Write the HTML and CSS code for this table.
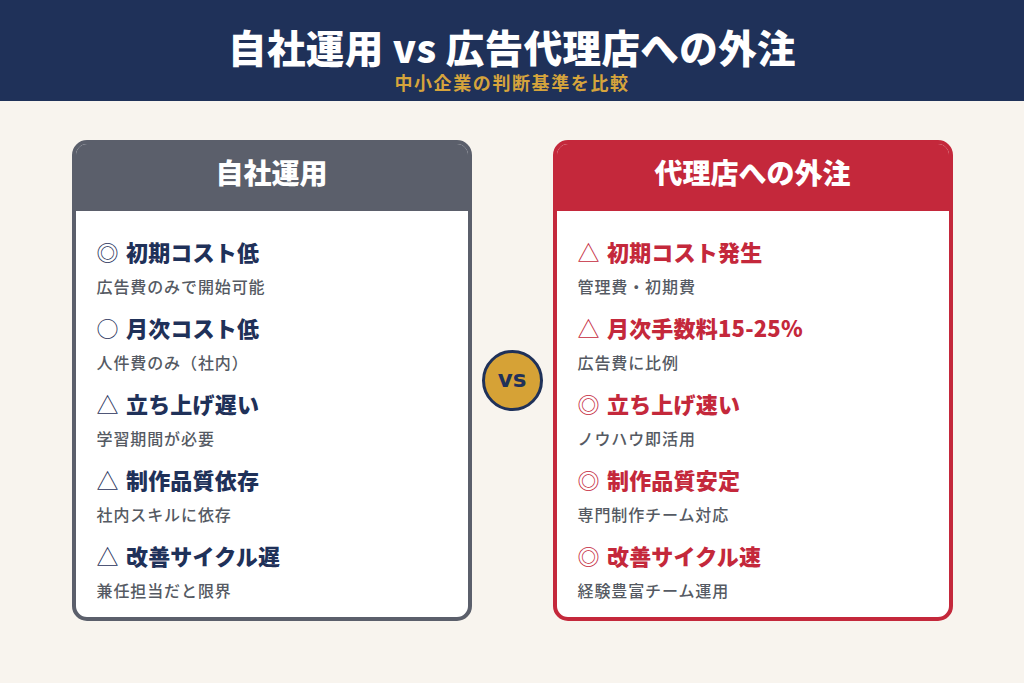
FILE: index.html
```html
<!DOCTYPE html>
<html lang="ja">
<head>
<meta charset="utf-8">
<link rel="stylesheet" href="styles.css">
</head>
<body>
<header class="banner">
  <h1 class="title">自社運用 vs 広告代理店への外注</h1>
  <p class="subtitle">中小企業の判断基準を比較</p>
</header>
<main class="compare">
  <section class="card card-self">
    <h2 class="card-head">自社運用</h2>
    <ul class="items">
      <li class="item"><p class="item-title"><span class="mark">◎</span> 初期コスト低</p><p class="item-sub">広告費のみで開始可能</p></li>
      <li class="item"><p class="item-title"><span class="mark">○</span> 月次コスト低</p><p class="item-sub">人件費のみ（社内）</p></li>
      <li class="item"><p class="item-title"><span class="mark">△</span> 立ち上げ遅い</p><p class="item-sub">学習期間が必要</p></li>
      <li class="item"><p class="item-title"><span class="mark">△</span> 制作品質依存</p><p class="item-sub">社内スキルに依存</p></li>
      <li class="item"><p class="item-title"><span class="mark">△</span> 改善サイクル遅</p><p class="item-sub">兼任担当だと限界</p></li>
    </ul>
  </section>
  <div class="vs-col"><div class="vs">vs</div></div>
  <section class="card card-agency">
    <h2 class="card-head">代理店への外注</h2>
    <ul class="items">
      <li class="item"><p class="item-title"><span class="mark">△</span> 初期コスト発生</p><p class="item-sub">管理費・初期費</p></li>
      <li class="item"><p class="item-title"><span class="mark">△</span> 月次手数料15-25%</p><p class="item-sub">広告費に比例</p></li>
      <li class="item"><p class="item-title"><span class="mark">◎</span> 立ち上げ速い</p><p class="item-sub">ノウハウ即活用</p></li>
      <li class="item"><p class="item-title"><span class="mark">◎</span> 制作品質安定</p><p class="item-sub">専門制作チーム対応</p></li>
      <li class="item"><p class="item-title"><span class="mark">◎</span> 改善サイクル速</p><p class="item-sub">経験豊富チーム運用</p></li>
    </ul>
  </section>
</main>
</body>
</html>
```
FILE: styles.css
```css
* { box-sizing: border-box; }
html, body { margin: 0; padding: 0; }
body {
  width: 1024px;
  height: 683px;
  background: #f8f4ee;
  font-family: "Noto Sans CJK JP", "Noto Sans", sans-serif;
  overflow: hidden;
}
.banner {
  background: #1f3159;
  height: 101px;
  display: flex;
  flex-direction: column;
  align-items: center;
  padding-top: 27px;
}
.title {
  margin: 0;
  color: #ffffff;
  font-size: 38.5px;
  font-weight: 900;
  line-height: 38px;
  letter-spacing: 0.4px;
}
.subtitle {
  margin: 7px 0 0;
  color: #d6a43c;
  font-size: 18px;
  font-weight: 700;
  line-height: 20px;
  letter-spacing: 1.6px;
}
.compare {
  display: flex;
  justify-content: center;
  padding-top: 39px;
}
.card {
  width: 400px;
  height: 481px;
  border: 4px solid;
  border-radius: 15px;
  background: #ffffff;
  overflow: hidden;
  display: flex;
  flex-direction: column;
}
.card-self { border-color: #5b5f6b; }
.card-agency { border-color: #c4283b; }
.card-head {
  margin: 0;
  height: 67px;
  display: flex;
  align-items: center;
  justify-content: center;
  color: #ffffff;
  font-size: 28px;
  font-weight: 900;
  padding-bottom: 12px;
}
.card-self .card-head { background: #5b5f6b; }
.card-agency .card-head { background: #c4283b; }
.items {
  list-style: none;
  margin: 0;
  padding: 25px 20px 0 21px;
  display: flex;
  flex-direction: column;
  gap: 15px;
}
.item p { margin: 0; }
.item-title {
  font-size: 22px;
  font-weight: 900;
  line-height: 30px;
  letter-spacing: 0.2px;
}
.card-self .item-title { color: #1f3159; }
.card-agency .item-title { color: #c4283b; }
.mark { font-weight: 400; margin-right: 2px; }
.item-sub {
  margin-top: 9px !important;
  font-size: 16px;
  font-weight: 500;
  line-height: 22px;
  color: #555a63;
  letter-spacing: 0.9px;
}
.vs-col {
  width: 81px;
  display: flex;
  align-items: center;
  justify-content: center;
}
.vs {
  width: 61px;
  height: 61px;
  border-radius: 50%;
  background: #d6a236;
  border: 3px solid #1f3159;
  display: flex;
  align-items: center;
  justify-content: center;
  color: #1f3159;
  font-family: "DejaVu Sans", sans-serif;
  font-size: 23px;
  font-weight: 700;
  line-height: 1;
  padding-bottom: 2px;
}
```
